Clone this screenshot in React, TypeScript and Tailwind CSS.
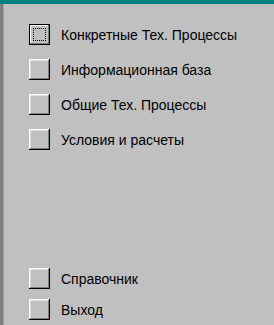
import React from 'react';

interface MenuItemProps {
  label: string;
  focused?: boolean;
}

const MenuItem: React.FC<MenuItemProps> = ({ label, focused }) => (
  <div className="flex items-center h-[21px]">
    {focused ? (
      <button className="relative w-[21px] h-[21px] bg-[#c0c0c0] border border-black shadow-[inset_-1px_-1px_#808080,inset_1px_1px_#ffffff]">
        <span className="absolute inset-[3px] border border-dotted border-black" />
      </button>
    ) : (
      <button className="w-[21px] h-[21px] bg-[#c0c0c0] shadow-[inset_-1px_-1px_#000000,inset_1px_1px_#ffffff,inset_-2px_-2px_#808080,inset_2px_2px_#dfdfdf]" />
    )}
    <span className="ml-[11px] text-[14px] leading-none text-black">{label}</span>
  </div>
);

export default function App() {
  return (
    <div
      className="h-[325px] w-[274px] flex flex-col bg-[#c0c0c0] overflow-hidden"
      style={{ fontFamily: '"Liberation Sans", Arial, sans-serif' }}
    >
      {/* Title strip */}
      <div className="h-[4px] bg-[#008080] shrink-0" />
      <div className="flex flex-1">
        <div className="w-[3px] bg-[#808080]" />
        <div className="w-[1px] bg-[#a0a0a0]" />
        <div className="flex flex-col flex-1 pl-[25px] pt-[20px] pb-[5px]">
          <div className="flex flex-col gap-[14px]">
            <MenuItem label="Конкретные Тех. Процессы" focused />
            <MenuItem label="Информационная база" />
            <MenuItem label="Общие Тех. Процессы" />
            <MenuItem label="Условия и расчеты" />
          </div>
          <div className="flex-1" />
          <div className="flex flex-col gap-[10px]">
            <MenuItem label="Справочник" />
            <MenuItem label="Выход" />
          </div>
        </div>
      </div>
    </div>
  );
}
